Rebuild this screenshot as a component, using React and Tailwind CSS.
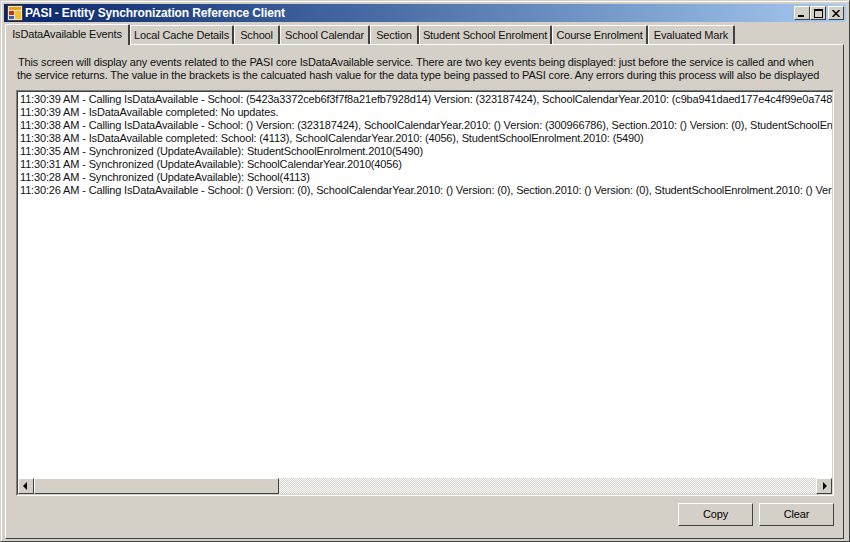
import React from 'react';

const tabs = [
	{ label: 'Local Cache Details', width: 'w-[104px]' },
	{ label: 'School', width: 'w-[46px]' },
	{ label: 'School Calendar', width: 'w-[90px]' },
	{ label: 'Section', width: 'w-[49px]' },
	{ label: 'Student School Enrolment', width: 'w-[133px]' },
	{ label: 'Course Enrolment', width: 'w-[96px]' },
	{ label: 'Evaluated Mark', width: 'w-[87px]' },
];

const logLines = [
	'11:30:39 AM - Calling IsDataAvailable - School: (5423a3372ceb6f3f7f8a21efb7928d14) Version: (323187424), SchoolCalendarYear.2010: (c9ba941daed177e4c4f99e0a748',
	'11:30:39 AM - IsDataAvailable completed: No updates.',
	'11:30:38 AM - Calling IsDataAvailable - School: () Version: (323187424), SchoolCalendarYear.2010: () Version: (300966786), Section.2010: () Version: (0), StudentSchoolEnr',
	'11:30:38 AM - IsDataAvailable completed: School: (4113), SchoolCalendarYear.2010: (4056), StudentSchoolEnrolment.2010: (5490)',
	'11:30:35 AM - Synchronized (UpdateAvailable): StudentSchoolEnrolment.2010(5490)',
	'11:30:31 AM - Synchronized (UpdateAvailable): SchoolCalendarYear.2010(4056)',
	'11:30:28 AM - Synchronized (UpdateAvailable): School(4113)',
	'11:30:26 AM - Calling IsDataAvailable - School: () Version: (0), SchoolCalendarYear.2010: () Version: (0), Section.2010: () Version: (0), StudentSchoolEnrolment.2010: () Versi',
];

const raised = 'border border-t-white border-l-white border-r-[#404040] border-b-[#404040]';

function CaptionButton({ children, className = '' }) {
	return (
		<div className={`w-[16px] h-[14px] bg-[#d4d0c8] flex items-center justify-center ${raised} ${className}`}>
			{children}
		</div>
	);
}

function ArrowButton({ points }) {
	return (
		<div className={`w-[16px] h-full bg-[#d4d0c8] flex items-center justify-center ${raised}`}>
			<svg width="8" height="8" viewBox="0 0 8 8">
				<polygon points={points} fill="#000" />
			</svg>
		</div>
	);
}

function Button({ children }) {
	return (
		<div className={`w-[75px] h-[23px] flex items-center justify-center text-[11px] tracking-[-0.15px] text-black ${raised}`}>
			{children}
		</div>
	);
}

export default function App() {
	return (
		<div className="w-[850px] h-[542px] bg-[#d4d0c8] pt-[3px] px-[3px] pb-[2px] flex flex-col font-['Liberation_Sans',sans-serif] overflow-hidden border border-t-[#d4d0c8] border-l-[#d4d0c8] border-r-[#404040] border-b-[#404040] shadow-[inset_1px_1px_0_#ffffff]">
			<div className="h-[18px] shrink-0 flex items-center pl-[3px] pr-[2px] bg-gradient-to-r from-[#0a246a] to-[#a6caf0]">
				<svg width="16" height="16" viewBox="0 0 16 16" className="shrink-0">
					<rect x="0.5" y="0.5" width="15" height="15" fill="#f2e6c0" stroke="#4a3a30" />
					<rect x="2" y="2" width="12" height="3" fill="#e8a020" />
					<rect x="2" y="6" width="5" height="4" fill="#c83020" />
					<rect x="2" y="11" width="5" height="3" fill="#3060c0" />
					<rect x="8" y="6" width="6" height="8" fill="#f0c030" />
				</svg>
				<span className="ml-[2px] text-[12px] font-bold tracking-[-0.13px] text-white leading-none whitespace-nowrap">PASI - Entity Synchronization Reference Client</span>
				<div className="ml-auto flex items-center">
					<CaptionButton>
						<div className="w-[6px] h-[2px] bg-black mt-[6px] -ml-[2px]" />
					</CaptionButton>
					<CaptionButton>
						<div className="w-[9px] h-[9px] border border-black border-t-2" />
					</CaptionButton>
					<CaptionButton className="ml-[2px]">
						<svg width="8" height="7" viewBox="0 0 8 7">
							<path d="M0.5 0 L7.5 7 M7.5 0 L0.5 7" stroke="#000" strokeWidth="1.5" />
						</svg>
					</CaptionButton>
				</div>
			</div>

			<div className="flex-1 flex flex-col min-h-0 pt-[1px] pl-[1px] pr-[2px]">
				<div className="h-[21px] shrink-0 flex items-end relative z-10 text-[11px] tracking-[-0.15px] text-[#111] whitespace-nowrap">
					<div className="h-[21px] w-[125px] bg-[#d4d0c8] border-l border-t border-r-2 border-t-white border-l-white border-r-[#404040] rounded-t-[2px] flex items-center justify-center -mb-[1px] pb-[2px]">
						IsDataAvailable Events
					</div>
					{tabs.map(tab => (
						<div key={tab.label} className={`h-[19px] ${tab.width} flex items-center justify-center border-l border-t border-r-2 border-t-white border-l-white border-r-[#404040] rounded-t-[2px]`}>
							{tab.label}
						</div>
					))}
				</div>

				<div className="flex-1 min-h-0 flex flex-col border border-t-white border-l-white border-r-[#404040] border-b-[#404040] pt-[11px] pl-[10px] pr-[9px] pb-[12px]">
					<div className="text-[11px] tracking-[-0.15px] leading-[13px] text-[#111] h-[34px] shrink-0 whitespace-nowrap">
						<p className="pl-[2px]">This screen will display any events related to the PASI core IsDataAvailable service. There are two key events being displayed: just before the service is called and when</p>
						<p className="pl-[1px]">the service returns. The value in the brackets is the calcuated hash value for the data type being passed to PASI core. Any errors during this process will also be displayed</p>
					</div>

					<div className="flex-1 min-h-0 flex flex-col bg-white border border-t-[#808080] border-l-[#808080] border-r-white border-b-white">
						<div className="flex-1 min-h-0 flex flex-col border border-t-[#404040] border-l-[#404040] border-r-[#d4d0c8] border-b-[#d4d0c8]">
							<div className="flex-1 min-h-0 overflow-hidden pt-[1px] pl-[2px] text-[11px] tracking-[-0.15px] leading-[13px] text-[#111] whitespace-nowrap">
								{logLines.map((line, i) => (
									<div key={i}>{line}</div>
								))}
							</div>
							<div className="h-[16px] shrink-0 flex bg-[repeating-conic-gradient(#d4d0c8_0%_25%,#ffffff_0%_50%)] bg-[length:2px_2px]">
								<ArrowButton points="5,0 5,8 1,4" />
								<div className={`w-[245px] bg-[#d4d0c8] ${raised}`} />
								<div className="flex-1" />
								<ArrowButton points="3,0 3,8 7,4" />
							</div>
						</div>
					</div>

					<div className="mt-[7px] flex justify-end gap-[6px] shrink-0">
						<Button>Copy</Button>
						<Button>Clear</Button>
					</div>
				</div>
			</div>
		</div>
	);
}
